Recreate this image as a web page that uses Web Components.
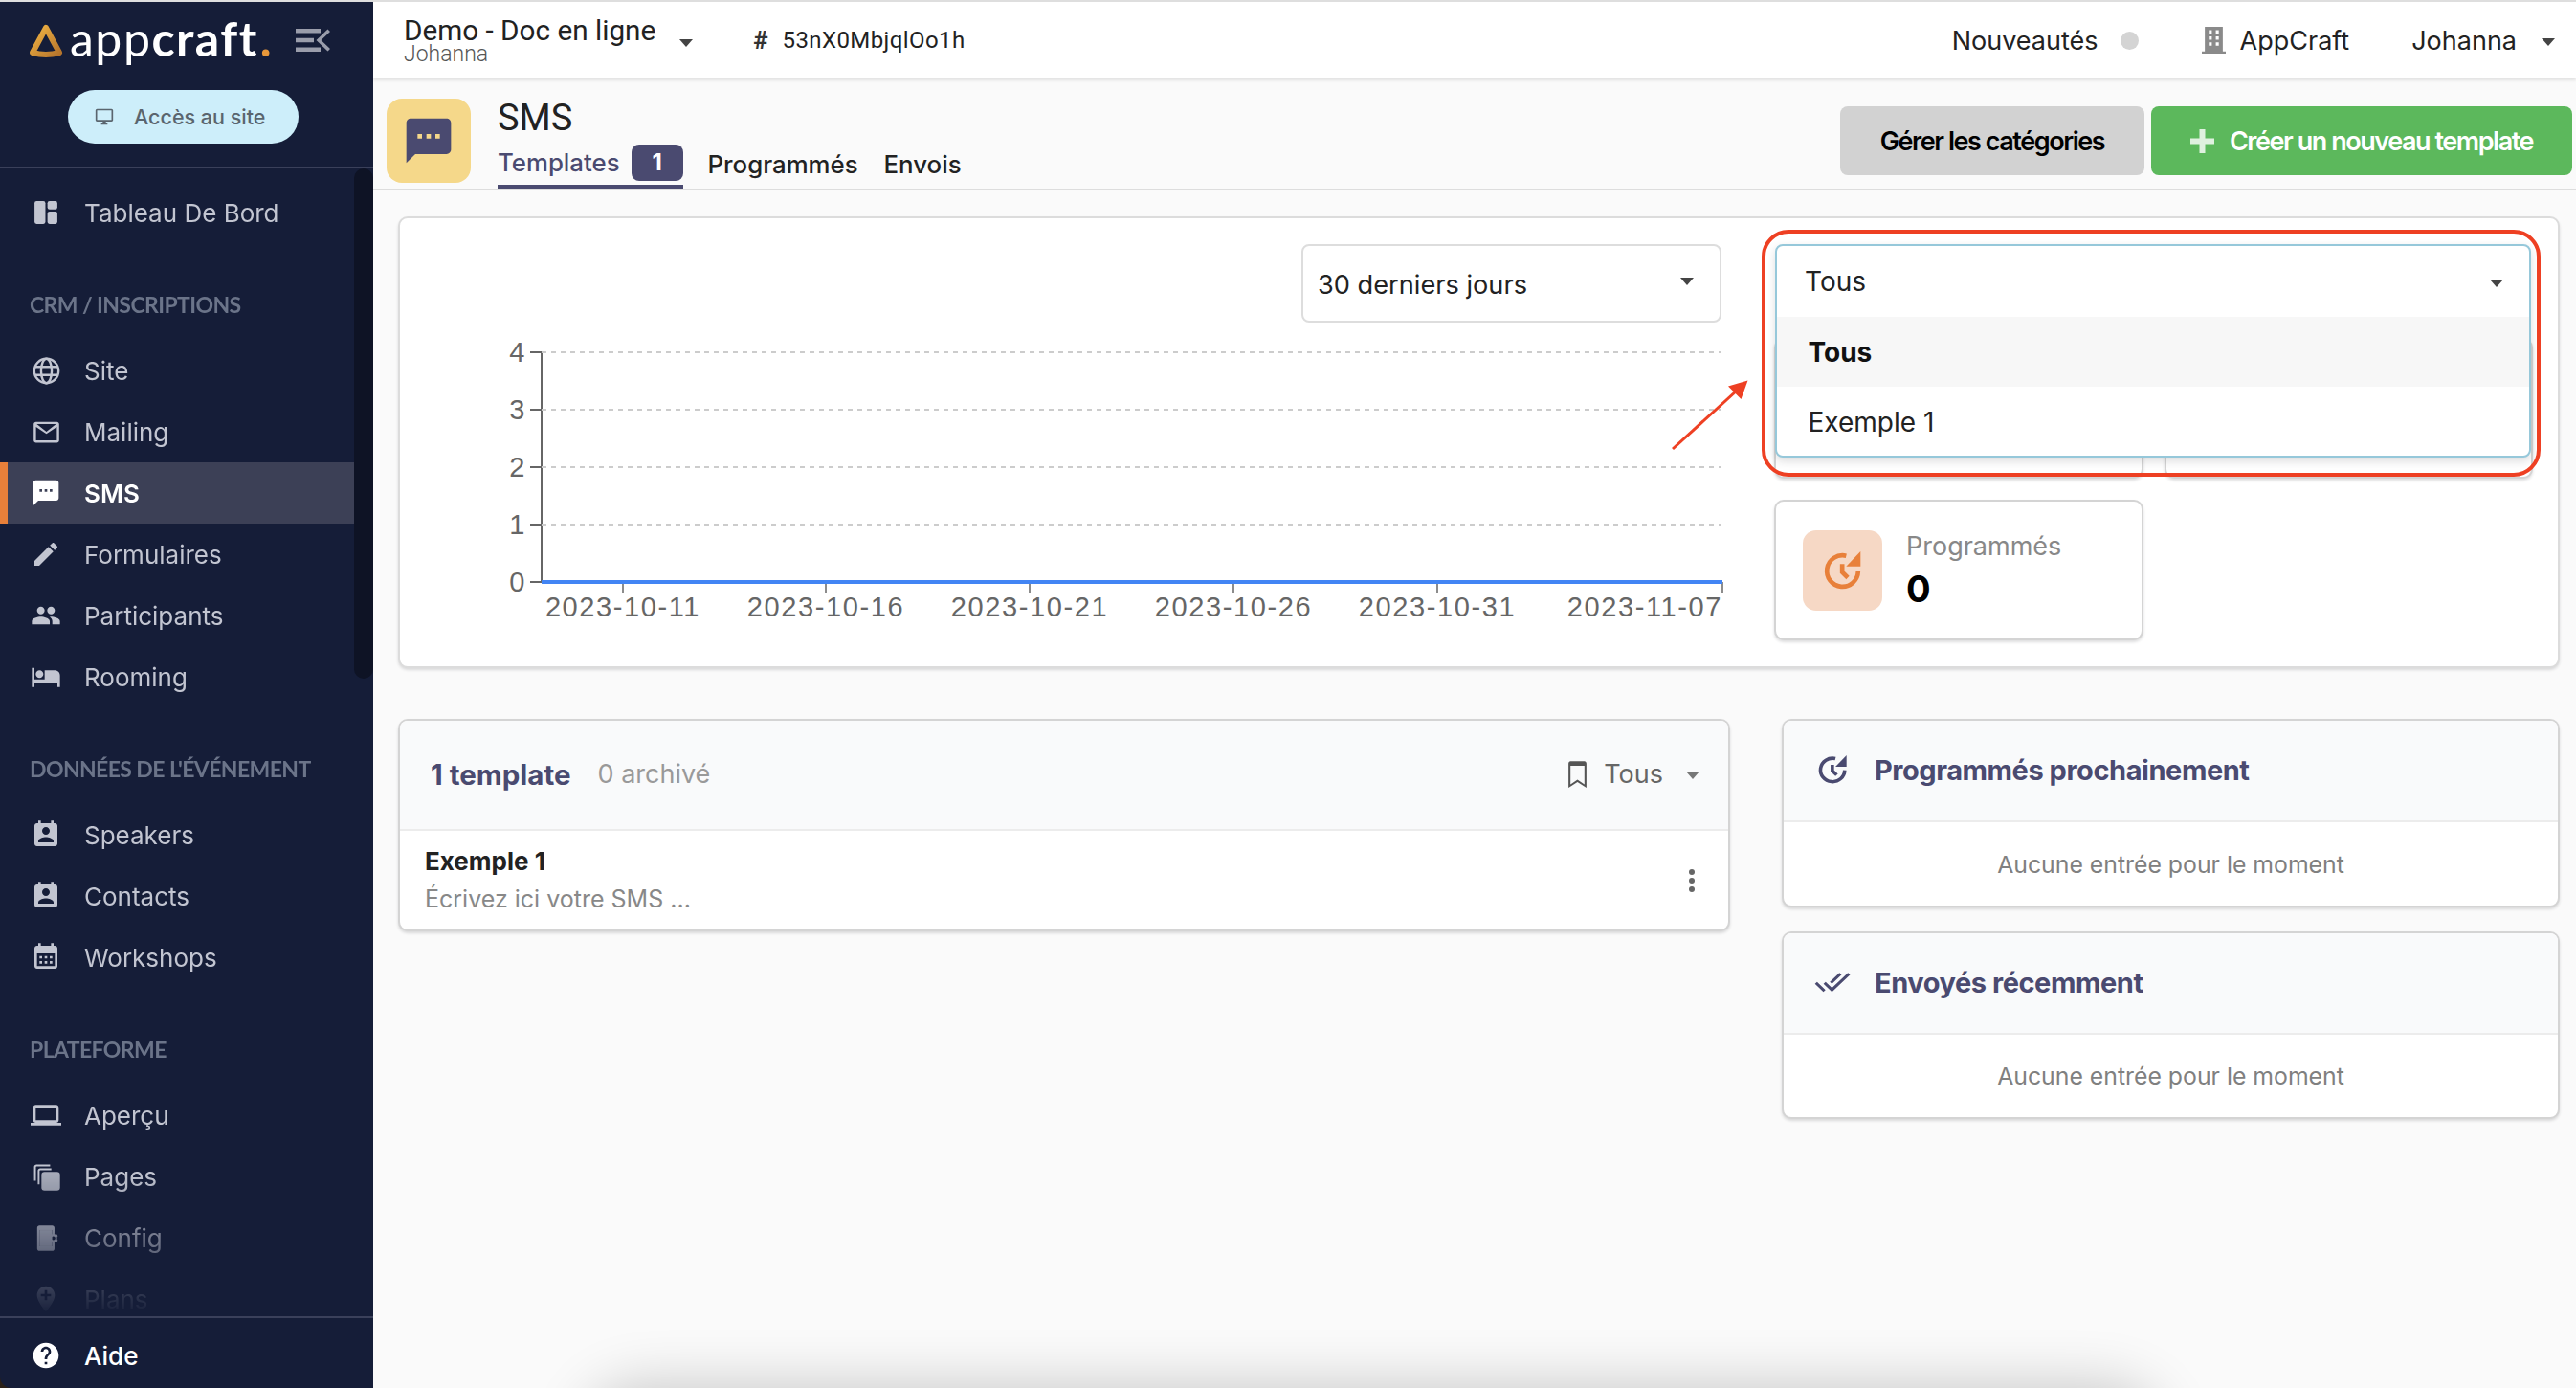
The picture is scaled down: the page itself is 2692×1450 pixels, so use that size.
<!DOCTYPE html>
<html lang="fr">
<head>
<meta charset="utf-8">
<title>SMS</title>
<style>
  html, body { margin: 0; height: 100%; overflow: hidden; background: #fafafa; }
  body { font-family: Inter, "Liberation Sans", sans-serif; }
</style>
</head>
<body>
<app-shell></app-shell>
<script>
const ICONS = {
  dashboard: '<rect x="1" y="1" width="10.5" height="22" rx="2"/><rect x="13.5" y="1" width="9.5" height="8" rx="2"/><rect x="13.5" y="11" width="9.5" height="12" rx="2"/>',
  globe: '<g fill="none" stroke="currentColor" stroke-width="2"><circle cx="12" cy="12" r="10.5"/><ellipse cx="12" cy="12" rx="4.6" ry="10.5"/><path d="M2 8.5h20M2 15.5h20"/></g>',
  mail: '<path d="M21 3H3C1.9 3 1 3.9 1 5v14c0 1.1.9 2 2 2h18c1.1 0 2-.9 2-2V5c0-1.1-.9-2-2-2zm0 16H3V7.5l9 6 9-6V19zm-9-7.5L3.6 5h16.8L12 11.500z"/>',
  sms: '<path d="M20 2H4c-1.100 0-1.990.9-1.990 2L2 22l4-4h14c1.100 0 2-.9 2-2V4c0-1.100-.9-2-2-2zM9 11H7V9h2v2zm4 0h-2V9h2v2zm4 0h-2V9h2v2z"/>',
  edit: '<path d="M3 17.250V21h3.750L17.810 9.940l-3.750-3.750L3 17.250zM20.710 7.040c.39-.39.39-1.020 0-1.410l-2.340-2.340c-.39-.39-1.020-.39-1.410 0l-1.830 1.830 3.750 3.750 1.830-1.830z"/>',
  people: '<path d="M16 11c1.660 0 2.990-1.340 2.990-3S17.660 5 16 5c-1.660 0-3 1.340-3 3s1.340 3 3 3zm-8 0c1.660 0 2.990-1.340 2.990-3S9.660 5 8 5C6.340 5 5 6.340 5 8s1.340 3 3 3zm0 2c-2.330 0-7 1.170-7 3.500V19h14v-2.500c0-2.330-4.670-3.500-7-3.500zm8 0c-.29 0-.62.02-.97.05 1.160.84 1.970 1.970 1.970 3.450V19h6v-2.500c0-2.330-4.670-3.500-7-3.500z"/>',
  hotel: '<path d="M7 13c1.660 0 3-1.340 3-3S8.660 7 7 7s-3 1.340-3 3 1.340 3 3 3zm12-6h-8v7H3V5H1v15h2v-3h18v3h2v-9c0-2.210-1.790-4-4-4z"/>',
  contact: '<path d="M19 3h-1V1h-2v2H8V1H6v2H5c-1.110 0-2 .9-2 2v14c0 1.100.89 2 2 2h14c1.100 0 2-.9 2-2V5c0-1.100-.9-2-2-2zm-7 3c1.660 0 3 1.340 3 3s-1.340 3-3 3-3-1.340-3-3 1.340-3 3-3zm6 12H6v-1c0-2 4-3.100 6-3.100s6 1.100 6 3.100v1z"/>',
  calendar: '<path fill-rule="evenodd" d="M19 3h-1V1h-2v2H8V1H6v2H5C3.900 3 3 3.900 3 5v14c0 1.100.9 2 2 2h14c1.100 0 2-.9 2-2V5c0-1.100-.9-2-2-2zM5 9h14v10H5V9z"/><path d="M7 11h2v2H7zM11 11h2v2h-2zM15 11h2v2h-2zM7 15h2v2H7zM11 15h2v2h-2zM15 15h2v2h-2z"/>',
  laptop: '<path d="M20 18c1.100 0 1.990-.9 1.990-2L22 6c0-1.100-.9-2-2-2H4c-1.100 0-2 .9-2 2v10c0 1.100.9 2 2 2H0v2h24v-2h-4zM4 6h16v10H4V6z"/>',
  pages: '<path d="M2 4c0-1.100.9-2 2-2h11v1.500H4c-.3 0-.5.2-.5.5v11H2zM5 7c0-1.100.9-2 2-2h9v1.500H7c-.3 0-.5.2-.5.5v11H5z"/><rect x="8" y="8" width="15" height="15" rx="2.500" opacity=".85"/>',
  config: '<path fill-rule="evenodd" d="M6 1h11c1.100 0 2 .9 2 2v5h-2V5H6v14h11v-3h2v5c0 1.100-.9 2-2 2H6c-1.100 0-2-.9-2-2V3c0-1.100.9-2 2-2z"/><rect x="6" y="5" width="11" height="14"/><path fill-rule="evenodd" d="M19 8.500l1.100.4.9-.3.9 1.500-.7.7v2.400l.7.7-.9 1.500-.9-.3-1.100.4-.3 1h-1.400l-.3-1 -1.100-.4-.9.3-.9-1.500.7-.7v-2.400l-.7-.7.9-1.500.9.3 1.100-.4.3-1h1.400zM18 10.300a1.700 1.700 0 100 3.400 1.700 1.700 0 000-3.400z"/>',
  pin: '<path d="M12 2C8.140 2 5 5.140 5 9c0 5.250 7 13 7 13s7-7.750 7-13c0-3.860-3.140-7-7-7zm4 8h-3v3h-2v-3H8V8h3V5h2v3h3v2z"/>',
  help: '<path d="M12 2C6.480 2 2 6.480 2 12s4.480 10 10 10 10-4.480 10-10S17.520 2 12 2zm1 17h-2v-2h2v2zm2.070-7.750l-.9.92C13.450 12.900 13 13.500 13 15h-2v-.5c0-1.100.45-2.100 1.170-2.830l1.240-1.260c.37-.36.59-.86.59-1.410 0-1.100-.9-2-2-2s-2 .9-2 2H8c0-2.210 1.790-4 4-4s4 1.790 4 4c0 .88-.36 1.680-.93 2.250z"/>',
  desktop: '<path d="M21 2H3c-1.100 0-2 .9-2 2v12c0 1.100.9 2 2 2h7v2H8v2h8v-2h-2v-2h7c1.100 0 2-.9 2-2V4c0-1.100-.9-2-2-2zm0 14H3V4h18v12z"/>',
  building: '<path fill-rule="evenodd" d="M3 0h18v22h3v2H0v-2h3V0zm4 3v3h3V3H7zm7 0v3h3V3h-3zM7 8.500v3h3v-3H7zm7 0v3h3v-3h-3zM7 14v3h3v-3H7zm7 0v3h3v-3h-3z"/>',
  caret: '<path d="M0 0h14L7 8z"/>',
  bookmark: '<path d="M19 1H5c-1.100 0-2 .9-2 2v21l9-5 9 5V3c0-1.100-.9-2-2-2zm0 20l-7-4-7 4V5h14v16z"/>',
  kebab: '<circle cx="12" cy="4" r="3"/><circle cx="12" cy="13" r="3"/><circle cx="12" cy="22" r="3"/>',
  plus: '<path d="M9.500 0h6v9.500H25v6h-9.500V25h-6v-9.500H0v-6h9.500z"/>',
  scheduled: '<g fill="none" stroke="currentColor" stroke-width="2.800"><path d="M21.500 12.500A9.800 9.800 0 1 1 14 2.800"/><path d="M11.500 8v5l3.500 3.500"/></g><path d="M23 0v9.500h-9z"/>',
  doneall: '<path d="M18 7l-1.410-1.410-6.340 6.340 1.410 1.410L18 7zm4.240-1.410L11.660 16.170 7.480 12l-1.410 1.410L11.660 19l12-12-1.420-1.410zM.41 13.410L6 19l1.410-1.410L1.830 12 .41 13.410z"/>',
  collapse: '<path d="M0 0h26v4.500H0zM0 10h19v4.500H0zM0 20h26v4.500H0z"/><path d="M36 3L26.500 12.200 36 21.500 33.500 24 21.500 12.200 33.500.5z"/>'
};

class UiIcon extends HTMLElement {
  constructor() {
    super();
    this.attachShadow({ mode: 'open' });
  }

  connectedCallback() {
    const name = this.getAttribute('name');
    const w = this.getAttribute('w') || 24;
    const h = this.getAttribute('h') || w;
    const box = this.getAttribute('box') || '0 0 24 24';
    this.shadowRoot.innerHTML = `
      <style>
        :host { display: inline-flex; flex: none; width: ${w}px; height: ${h}px; }
        svg { display: block; width: 100%; height: 100%; fill: currentColor; overflow: visible; }
      </style>
      <svg viewBox="${box}" preserveAspectRatio="none">${ICONS[name] || ''}</svg>
    `;
  }
}
customElements.define('ui-icon', UiIcon);

class NavItem extends HTMLElement {
  constructor() {
    super();
    this.attachShadow({ mode: 'open' });
  }

  connectedCallback() {
    const active = this.hasAttribute('active');
    const w = this.getAttribute('w') || 32;
    this.shadowRoot.innerHTML = `
      <style>
        :host {
          display: flex;
          align-items: center;
          height: 64px;
          width: 370px;
          box-sizing: border-box;
          color: ${active ? '#fff' : 'var(--nav-color, #c2c5d1)'};
          background: ${active ? '#3c4056' : 'transparent'};
          font: ${active ? 600 : 400} 26px Inter, sans-serif;
          position: relative;
        }
        :host([active])::before {
          content: '';
          position: absolute;
          left: 0; top: 0; bottom: 0;
          width: 8px;
          background: #e8803a;
        }
        .ic { width: 96px; display: flex; justify-content: center; flex: none; }
        .label { margin-left: -8px; }
      </style>
      <span class="ic"><ui-icon name="${this.getAttribute('icon')}" w="${w}"></ui-icon></span>
      <span class="label"><slot></slot></span>
    `;
  }
}
customElements.define('nav-item', NavItem);

class NavHeading extends HTMLElement {
  constructor() {
    super();
    this.attachShadow({ mode: 'open' });
    this.shadowRoot.innerHTML = `
      <style>
        :host {
          display: block;
          height: 101px;
          box-sizing: border-box;
          padding: 50px 0 0 31px;
          font: 700 23px/28px Lato, sans-serif;
          letter-spacing: -0.6px;
          color: #6b7489;
          white-space: nowrap;
        }
      </style>
      <slot></slot>
    `;
  }
}
customElements.define('nav-heading', NavHeading);

class AppSidebar extends HTMLElement {
  constructor() {
    super();
    this.attachShadow({ mode: 'open' });
    this.shadowRoot.innerHTML = `
      <style>
        :host { display: block; background: #2b2118; min-height: 0; }
        .side {
          height: 100%;
          background: #151d38;
          border-bottom-left-radius: 12px;
          display: flex;
          flex-direction: column;
          overflow: hidden;
        }
        .top { flex: none; border-bottom: 2px solid #3a405a; height: 172px; }
        .brand { display: flex; align-items: center; height: 92px; padding-left: 30px; }
        .word { display: inline-flex; font: 400 50px/60px Lato, sans-serif; letter-spacing: 1.5px; color: #fff; margin-left: 7px; margin-top: -17px; }
        .word b { font-weight: 700; }
        .word i { font-style: normal; font-weight: 700; color: #e8983a; margin-left: 2px; }
        .collapse { color: #9a9dab; margin-left: 24px; margin-top: -8px; }
        .access {
          display: flex;
          align-items: center;
          width: 241px;
          height: 56px;
          margin-left: 71px;
          box-sizing: border-box;
          padding-left: 28px;
          gap: 21px;
          border-radius: 28px;
          background: #cdeefa;
          color: #5a656e;
          font: 500 21.500px Inter, sans-serif;
        }
        .scroll { flex: 1; min-height: 0; position: relative; }
        .nav {
          height: 100%;
          padding-top: 14px;
          box-sizing: border-box;
          overflow: hidden;
          -webkit-mask-image: linear-gradient(to bottom, #000 calc(100% - 150px), transparent 100%);
          mask-image: linear-gradient(to bottom, #000 calc(100% - 150px), transparent 100%);
        }
        .thumb {
          position: absolute;
          top: 0;
          right: 0;
          width: 20px;
          height: 533px;
          border-radius: 10px;
          background: #0e1325;
        }
        .foot { flex: none; height: 75px; padding-top: 5px; box-sizing: border-box; border-top: 2px solid #3a405a; display: flex; align-items: center; }
        .foot nav-item { --nav-color: #fff; font-weight: 500; }
      </style>
      <div class="side">
        <div class="top">
          <div class="brand">
            <svg width="36" height="36" viewBox="0 0 36 36" style="flex:none;margin-top:-10px">
              <defs><linearGradient id="g" x1="0" y1="0" x2="1" y2="1"><stop offset="0" stop-color="#f2b544"/><stop offset="1" stop-color="#b5742c"/></linearGradient></defs>
              <path d="M18 4 L32 30 Q18 34 4 30 Z" fill="none" stroke="url(#g)" stroke-width="6" stroke-linejoin="round"/>
            </svg>
            <span class="word"><span>app</span><b>craft</b><i>.</i></span>
            <span class="collapse"><ui-icon name="collapse" w="36" h="24" box="0 0 36 24.500"></ui-icon></span>
          </div>
          <div class="access"><ui-icon name="desktop" w="20" h="20"></ui-icon><span>Accès au site</span></div>
        </div>
        <div class="scroll">
          <div class="nav"><slot></slot></div>
          <div class="thumb"></div>
        </div>
        <div class="foot"><nav-item icon="help">Aide</nav-item></div>
      </div>
    `;
  }
}
customElements.define('app-sidebar', AppSidebar);

class TopBar extends HTMLElement {
  constructor() {
    super();
    this.attachShadow({ mode: 'open' });
    this.shadowRoot.innerHTML = `
      <style>
        :host {
          display: flex;
          align-items: center;
          height: 80px;
          flex: none;
          background: #fff;
          box-shadow: 0 2px 3px rgba(0,0,0,.1);
          font-family: Roboto, sans-serif;
          color: #222;
          position: relative;
          z-index: 1;
          padding-left: 32px;
          box-sizing: border-box;
        }
        .event { display: flex; flex-direction: column; margin-top: -1px; }
        .name { font-size: 29.700px; line-height: 30px; }
        .user { font-size: 23px; line-height: 19px; font-weight: 300; color: #555; }
        .c1 { color: #444; margin: 6px 0 0 25px; }
        .code { display: flex; align-items: center; margin-left: 63px; font-size: 24px; letter-spacing: .4px; gap: 15px; }
        .hash { font-weight: 700; font-size: 26px; letter-spacing: 0; color: #333; }
        .right { margin-left: auto; display: flex; align-items: center; font: 400 27px Inter, sans-serif; }
        .dot { width: 19px; height: 19px; border-radius: 50%; background: #d4d4d4; margin-left: 23px; }
        .bld { color: #8a8a8a; margin-left: 66px; margin-right: 15px; }
        .me { margin-left: 65px; }
        .c2 { color: #444; margin: 3px 22px 0 26px; }
      </style>
      <div class="event">
        <span class="name">Demo - Doc en ligne</span>
        <span class="user">Johanna</span>
      </div>
      <ui-icon class="c1" name="caret" w="14" h="8" box="0 0 14 8"></ui-icon>
      <div class="code"><span class="hash">#</span><span>53nX0MbjqlOo1h</span></div>
      <div class="right">
        <span>Nouveautés</span><span class="dot"></span>
        <ui-icon class="bld" name="building" w="25" h="28"></ui-icon><span>AppCraft</span>
        <span class="me">Johanna</span><ui-icon class="c2" name="caret" w="14" h="8" box="0 0 14 8"></ui-icon>
      </div>
    `;
  }
}
customElements.define('top-bar', TopBar);

class PageHeader extends HTMLElement {
  constructor() {
    super();
    this.attachShadow({ mode: 'open' });
    this.shadowRoot.innerHTML = `
      <style>
        :host {
          display: flex;
          height: 117px;
          flex: none;
          box-sizing: border-box;
          border-bottom: 2px solid #ddd;
          padding: 21px 4px 0 14px;
          position: relative;
        }
        .badge {
          width: 88px; height: 88px;
          border-radius: 16px;
          background: #f5d88a;
          color: #4a4a70;
          display: flex; align-items: center; justify-content: center;
          flex: none;
        }
        .mid { margin-left: 28px; display: flex; flex-direction: column; }
        h1 { margin: -3px 0 0; font: 400 38px/46px Roboto, sans-serif; color: #222; }
        .tabs { display: flex; align-items: flex-end; margin-top: 5px; font: 500 25.800px Inter, sans-serif; color: #222; }
        .tab { display: flex; align-items: center; height: 45px; box-sizing: border-box; padding-bottom: 7px; }
        .tab.on { color: #4a4a70; border-bottom: 4px solid #4a4a70; height: 46px; padding-bottom: 5px; }
        .count {
          margin-left: 12px;
          width: 54px; height: 38px;
          border-radius: 8px;
          background: #4a4a70;
          color: #fff;
          font-weight: 700;
          font-size: 24px;
          display: flex; align-items: center; justify-content: center;
        }
        .actions { margin-left: auto; display: flex; gap: 7px; padding-top: 8px; }
        .btn {
          height: 72px;
          border-radius: 8px;
          display: flex; align-items: center; justify-content: center;
          font: 600 27px Inter, sans-serif;
          letter-spacing: -1.450px;
          box-sizing: border-box;
        }
        .grey { width: 318px; background: #d2d2d2; color: #000; }
        .green { width: 440px; background: #5cb85c; color: #fff; gap: 16px; }
        .green ui-icon { color: #dff1df; }
      </style>
      <div class="badge"><ui-icon name="sms" w="56"></ui-icon></div>
      <div class="mid">
        <h1>SMS</h1>
        <div class="tabs">
          <div class="tab on">Templates<span class="count">1</span></div>
          <div class="tab" style="margin-left:26px">Programmés</div>
          <div class="tab" style="margin-left:27px">Envois</div>
        </div>
      </div>
      <div class="actions">
        <div class="btn grey">Gérer les catégories</div>
        <div class="btn green"><ui-icon name="plus" w="25" box="0 0 25 25"></ui-icon>Créer un nouveau template</div>
      </div>
    `;
  }
}
customElements.define('page-header', PageHeader);

class LineChart extends HTMLElement {
  constructor() {
    super();
    this.attachShadow({ mode: 'open' });
  }

  connectedCallback() {
    const x0 = 148, x1 = 1382;
    const yOf = v => 23 + (4 - v) * 60;
    const ticks = [[233, '2023-10-11'], [445, '2023-10-16'], [658, '2023-10-21'], [871, '2023-10-26'], [1084, '2023-10-31'], [1382, '2023-11-07']];
    let parts = '';
    for (let v = 4; v >= 0; v--) {
      if (v > 0) parts += `<line x1="${x0}" x2="1380" y1="${yOf(v)}" y2="${yOf(v)}" stroke="#ccc" stroke-width="2" stroke-dasharray="5 5"/>`;
      parts += `<line x1="${x0 - 12}" x2="${x0}" y1="${yOf(v)}" y2="${yOf(v)}" stroke="#666" stroke-width="2"/>`;
      parts += `<text x="${x0 - 16}" y="${yOf(v) + 10}" text-anchor="end">${v}</text>`;
    }
    ticks.forEach(([x, label], i) => {
      parts += `<line x1="${x}" x2="${x}" y1="${yOf(0)}" y2="274" stroke="#666" stroke-width="1.500"/>`;
      parts += `<text x="${x}" y="299" text-anchor="${i === ticks.length - 1 ? 'end' : 'middle'}">${label}</text>`;
    });
    this.shadowRoot.innerHTML = `
      <style>
        :host { display: block; width: 1392px; height: 320px; margin-top: 8px; }
        svg { display: block; }
        text { font: 29px "Liberation Sans", sans-serif; letter-spacing: 1.600px; fill: #666; }
      </style>
      <svg width="1392" height="320" viewBox="0 0 1392 320">
        <line x1="${x0}" x2="${x0}" y1="${yOf(4)}" y2="${yOf(0)}" stroke="#666" stroke-width="2"/>
        ${parts}
        <line x1="${x0}" x2="${x1}" y1="${yOf(0)}" y2="${yOf(0)}" stroke="#4285f4" stroke-width="4"/>
      </svg>
    `;
  }
}
customElements.define('line-chart', LineChart);

class StatCard extends HTMLElement {
  constructor() {
    super();
    this.attachShadow({ mode: 'open' });
  }

  connectedCallback() {
    const label = this.getAttribute('label');
    const body = label ? `
      <div class="tile"><ui-icon name="scheduled" w="40" h="40"></ui-icon></div>
      <div class="txt"><span class="lbl">${label}</span><span class="val">${this.getAttribute('value')}</span></div>
    ` : '';
    this.shadowRoot.innerHTML = `
      <style>
        :host {
          display: flex;
          height: 147px;
          box-sizing: border-box;
          border: 2px solid #d4d4d4;
          border-radius: 10px;
          box-shadow: 0 2px 3px rgba(34,36,38,.15);
          padding: 30px 0 0 28px;
          background: #fff;
        }
        .tile {
          width: 83px; height: 84px;
          border-radius: 14px;
          background: #f6d8c5;
          color: #e8803a;
          display: flex; align-items: center; justify-content: center;
        }
        .txt { display: flex; flex-direction: column; margin-left: 25px; }
        .lbl { font: 400 27px/30px Inter, sans-serif; color: #888; margin-top: 2px; }
        .val { font: 700 38px/44px Inter, sans-serif; color: #000; margin-top: 7px; }
      </style>
      ${body}
    `;
  }
}
customElements.define('stat-card', StatCard);

class UiSelect extends HTMLElement {
  constructor() {
    super();
    this.attachShadow({ mode: 'open' });
    this.shadowRoot.innerHTML = `
      <style>
        :host {
          display: flex;
          align-items: flex-start;
          justify-content: space-between;
          width: 439px;
          height: 82px;
          box-sizing: border-box;
          border: 2px solid #ddd;
          border-radius: 8px;
          background: #fff;
          padding: 22px 27px 0 15px;
          font: 400 27.200px/38px Inter, sans-serif;
          color: #222;
        }
        ui-icon { color: #444; margin-top: 11px; }
      </style>
      <slot></slot>
      <ui-icon name="caret" w="14" h="8" box="0 0 14 8"></ui-icon>
    `;
  }
}
customElements.define('ui-select', UiSelect);

class OpenSelect extends HTMLElement {
  constructor() {
    super();
    this.attachShadow({ mode: 'open' });
    this.shadowRoot.innerHTML = `
      <style>
        :host { display: block; height: 82px; margin: 0 0 16px 1px; width: 790px; position: relative; }
        .panel {
          position: absolute;
          inset: 0 0 auto 0;
          z-index: 2;
          height: 223px;
          box-sizing: border-box;
          border: 2px solid #96c8da;
          border-radius: 8px;
          background: #fff;
          box-shadow: 0 4px 10px rgba(34,36,38,.15);
          font: 400 28px Inter, sans-serif;
          color: #222;
          overflow: hidden;
        }
        .head { height: 74px; display: flex; align-items: center; justify-content: space-between; padding: 0 27px 0 29px; }
        .head span { margin-top: -1px; }
        .head ui-icon { color: #444; margin-top: 3px; }
        .opt { height: 73px; display: flex; align-items: center; padding-left: 32.500px; }
        .opt.sel { background: #f7f7f7; font-weight: 700; color: #111; }
      </style>
      <div class="panel">
        <div class="head"><span>Tous</span><ui-icon name="caret" w="14" h="8" box="0 0 14 8"></ui-icon></div>
        <div class="opt sel">Tous</div>
        <div class="opt">Exemple 1</div>
      </div>
    `;
  }
}
customElements.define('open-select', OpenSelect);

class ChartCard extends HTMLElement {
  constructor() {
    super();
    this.attachShadow({ mode: 'open' });
    this.shadowRoot.innerHTML = `
      <style>
        :host {
          display: flex;
          box-sizing: border-box;
          border: 2px solid #dcdcdc;
          border-radius: 10px;
          background: #fff;
          box-shadow: 0 2px 3px rgba(34,36,38,.15);
          padding: 27px 26px 27px 0;
          position: relative;
        }
        .left { width: 1392px; flex: none; display: flex; flex-direction: column; }
        ui-select { align-self: flex-end; margin-right: 11px; }
        .right { margin-left: 44px; width: 793px; flex: none; }
        .stats { display: grid; grid-template-columns: 386px 385px; gap: 22px; }
        .mark {
          position: absolute;
          left: 1423px; top: 12px;
          width: 814px; height: 258px;
          box-sizing: border-box;
          border: 4px solid #ee4023;
          border-radius: 28px;
          z-index: 3;
        }
        .arrow { position: absolute; left: 1322px; top: 162px; z-index: 3; }
      </style>
      <div class="left">
        <ui-select>30 derniers jours</ui-select>
        <line-chart></line-chart>
      </div>
      <div class="right">
        <open-select></open-select>
        <div class="stats">
          <stat-card></stat-card>
          <stat-card></stat-card>
          <stat-card label="Programmés" value="0"></stat-card>
        </div>
      </div>
      <div class="mark"></div>
      <svg class="arrow" width="100" height="90" viewBox="1740 390 100 90">
        <line x1="1748" y1="469" x2="1815" y2="408" stroke="#ee4023" stroke-width="3"/>
        <path d="M1826.500 397.500L1806 403.500 1819.500 417z" fill="#ee4023"/>
      </svg>
    `;
  }
}
customElements.define('chart-card', ChartCard);

class PanelCard extends HTMLElement {
  constructor() {
    super();
    this.attachShadow({ mode: 'open' });
    const head = this.getAttribute('head') || 105;
    const body = this.getAttribute('body') || 86;
    this.shadowRoot.innerHTML = `
      <style>
        :host {
          display: block;
          box-sizing: border-box;
          border: 2px solid #d4d4d4;
          border-radius: 10px;
          background: #fff;
          box-shadow: 0 2px 3px rgba(34,36,38,.15);
          overflow: hidden;
        }
        .head {
          height: ${head}px;
          box-sizing: border-box;
          background: #f9fafb;
          border-bottom: 2px solid #ececec;
          display: flex;
          align-items: center;
        }
        .body { height: ${body}px; display: flex; align-items: center; }
      </style>
      <div class="head"><slot name="head"></slot></div>
      <div class="body"><slot></slot></div>
    `;
  }
}
customElements.define('panel-card', PanelCard);

class ListPanel extends HTMLElement {
  constructor() {
    super();
    this.attachShadow({ mode: 'open' });
    this.shadowRoot.innerHTML = `
      <style>
        :host { display: block; width: 1392px; font-family: Inter, sans-serif; }
        .h { display: flex; align-items: center; width: 100%; padding: 0 30px 0 32px; box-sizing: border-box; font-size: 27px; margin-top: -2px; }
        .count { font-weight: 700; font-size: 29.500px; color: #4a4a70; }
        .arch { color: #999; margin-left: 28px; }
        .filter { margin-left: auto; display: flex; align-items: center; color: #666; }
        .filter .t { margin: 0 24px 0 15px; }
        .filter ui-icon { color: #555; }
        .filter .cr { color: #777; margin-top: 2px; }
        .row { display: flex; align-items: center; justify-content: space-between; width: 100%; padding: 0 26px 0 26px; box-sizing: border-box; }
        .nm { font: 700 26px/34px Inter, sans-serif; color: #222; }
        .ds { font: 400 25px/34px Inter, sans-serif; color: #888; margin-top: 5px; }
        .kb { color: #666; }
      </style>
      <panel-card head="115" body="103">
        <div class="h" slot="head">
          <span class="count">1 template</span><span class="arch">0 archivé</span>
          <span class="filter"><ui-icon name="bookmark" w="25" h="29"></ui-icon><span class="t">Tous</span><ui-icon class="cr" name="caret" w="14" h="8" box="0 0 14 8"></ui-icon></span>
        </div>
        <div class="row">
          <div><div class="nm">Exemple 1</div><div class="ds">Écrivez ici votre SMS ...</div></div>
          <ui-icon class="kb" name="kebab" w="24" h="26" box="0 0 24 26"></ui-icon>
        </div>
      </panel-card>
    `;
  }
}
customElements.define('list-panel', ListPanel);

class FeedPanel extends HTMLElement {
  constructor() {
    super();
    this.attachShadow({ mode: 'open' });
  }

  connectedCallback() {
    const h = this.getAttribute('head');
    const icon = this.getAttribute('icon');
    const iconTag = icon === 'doneall'
      ? '<ui-icon style="margin:0 -3px 0 -4px" name="doneall" w="38" h="21" box="0 5.500 24 14"></ui-icon>'
      : `<ui-icon name="${icon}" w="31" h="30"></ui-icon>`;
    this.shadowRoot.innerHTML = `
      <style>
        :host { display: block; }
        .h { display: flex; align-items: center; padding-left: 36px; gap: 28px; color: #4a4a70; font: 700 29px Inter, sans-serif; letter-spacing: -.45px; margin-top: -2px; }
        .b { width: 100%; text-align: center; font: 400 24.800px Inter, sans-serif; color: #808080; }
      </style>
      <panel-card head="${h}" body="${this.getAttribute('body')}">
        <div class="h" slot="head">${iconTag}<span>${this.getAttribute('title')}</span></div>
        <div class="b">Aucune entrée pour le moment</div>
      </panel-card>
    `;
  }
}
customElements.define('feed-panel', FeedPanel);

class AppShell extends HTMLElement {
  constructor() {
    super();
    this.attachShadow({ mode: 'open' });
    this.shadowRoot.innerHTML = `
      <style>
        :host {
          display: grid;
          grid-template-columns: 390px 1fr;
          grid-template-rows: minmax(0, 1fr);
          height: 1450px;
          box-sizing: border-box;
          border-top: 2px solid #dedede;
          position: relative;
          overflow: hidden;
        }
        main { display: flex; flex-direction: column; min-width: 0; }
        .content { padding: 27px 17px 0 26px; display: flex; flex-direction: column; }
        .lower { display: flex; align-items: flex-start; gap: 54px; margin-top: 53px; }
        .feeds { flex: 1; display: flex; flex-direction: column; gap: 25px; }
        .glow {
          position: absolute;
          left: 640px; width: 1590px; top: 1475px; height: 120px;
          border-radius: 30px;
          box-shadow: 0 0 60px 30px rgba(0,0,0,.2);
        }
      </style>
      <app-sidebar>
        <nav-item icon="dashboard" w="26">Tableau De Bord</nav-item>
        <nav-heading>CRM / INSCRIPTIONS</nav-heading>
        <nav-item icon="globe" w="29">Site</nav-item>
        <nav-item icon="mail" w="29">Mailing</nav-item>
        <nav-item icon="sms" active>SMS</nav-item>
        <nav-item icon="edit">Formulaires</nav-item>
        <nav-item icon="people">Participants</nav-item>
        <nav-item icon="hotel">Rooming</nav-item>
        <nav-heading>DONNÉES DE L'ÉVÉNEMENT</nav-heading>
        <nav-item icon="contact">Speakers</nav-item>
        <nav-item icon="contact">Contacts</nav-item>
        <nav-item icon="calendar">Workshops</nav-item>
        <nav-heading>PLATEFORME</nav-heading>
        <nav-item icon="laptop">Aperçu</nav-item>
        <nav-item icon="pages" w="31">Pages</nav-item>
        <nav-item icon="config" w="29">Config</nav-item>
        <nav-item icon="pin">Plans</nav-item>
      </app-sidebar>
      <main>
        <top-bar></top-bar>
        <page-header></page-header>
        <div class="content">
          <chart-card></chart-card>
          <div class="lower">
            <list-panel></list-panel>
            <div class="feeds">
              <feed-panel icon="scheduled" title="Programmés prochainement" head="106" body="87"></feed-panel>
              <feed-panel icon="doneall" title="Envoyés récemment" head="106" body="86"></feed-panel>
            </div>
          </div>
        </div>
      </main>
      <div class="glow"></div>
    `;
  }
}
customElements.define('app-shell', AppShell);
</script>
</body>
</html>
